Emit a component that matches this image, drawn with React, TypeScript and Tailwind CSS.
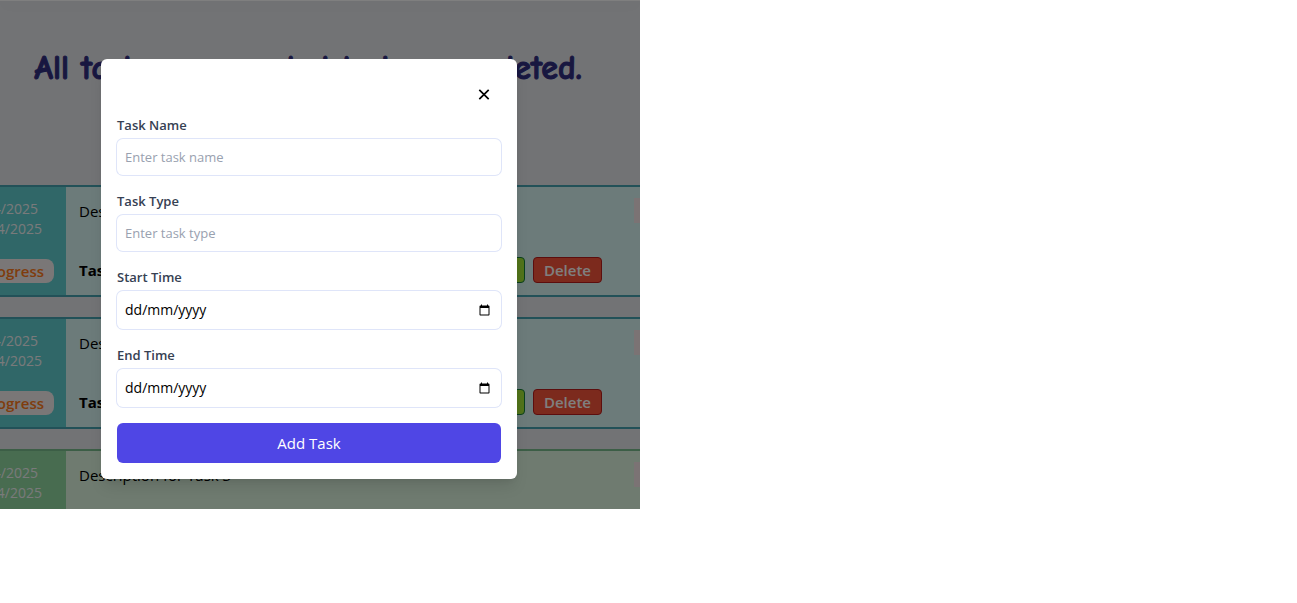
import { useState, type ReactNode } from "react";

type Tone = "teal" | "green";

interface Task {
  id: number;
  tone: Tone;
}

const tasks: Task[] = [
  { id: 1, tone: "teal" },
  { id: 2, tone: "teal" },
  { id: 3, tone: "green" },
];

const tones: Record<Tone, { card: string; side: string }> = {
  teal: { card: "border-[#44a3b0] bg-[#d8f6f4]", side: "bg-[#60ced0]" },
  green: { card: "border-[#78bc8c] bg-[#def6e0]", side: "bg-[#90d8a0]" },
};

function TaskCard({ id, tone }: Task) {
  const look = tones[tone];
  return (
    <article className={`flex h-28 shrink-0 overflow-hidden border-y-2 text-[15px] leading-5 ${look.card}`}>
      <div className={`flex w-[66px] shrink-0 flex-col items-end overflow-hidden whitespace-nowrap py-3 pr-3 text-[14px] text-gray-100 ${look.side}`}>
        <p className="pr-4">14/04/2025</p>
        <p className="pr-3">14/04/2025</p>
        <span className="mt-auto rounded-lg bg-[#f5eeee] px-2.5 py-0.5 text-[15px] font-semibold text-[#ff7a1a]">
          In Progress
        </span>
      </div>
      <div className="relative flex min-w-0 grow flex-col justify-between overflow-hidden pt-3.5 pr-[38px] pb-3 pl-[13px]">
        <p className="text-black">Description for Task {id}</p>
        <span className="absolute top-[11px] -right-16 h-[25px] w-[70px] bg-[#f6e6e8]" />
        <div className="flex items-center justify-between">
          <h2 className="font-bold text-black">Task {id}</h2>
          <div className="flex gap-2">
            <button type="button" className="rounded-sm border border-[#15803d] bg-[#a3e635] px-2.5 py-0.5 font-semibold text-white">
              Edit
            </button>
            <button type="button" className="h-[26px] w-[69px] rounded-sm border border-[#b91c1c] bg-[#f9553a] font-semibold text-white">
              Delete
            </button>
          </div>
        </div>
      </div>
    </article>
  );
}

function Field({ id, label, children }: { id: string; label: string; children: ReactNode }) {
  return (
    <div>
      <label htmlFor={id} className="mb-1 block text-[13px] leading-5 font-semibold text-gray-700">
        {label}
      </label>
      {children}
    </div>
  );
}

const inputLook =
  "block w-full rounded-md bg-white px-2 text-[13px] leading-5 ring-1 ring-[#dfe5f9] outline-none placeholder:text-gray-400";

function DateInput({ id }: { id: string }) {
  const [value, setValue] = useState("");
  const shown = value ? value.split("-").reverse().join("/") : "dd/mm/yyyy";
  return (
    <div className="relative">
      <input
        id={id}
        type="date"
        value={value}
        onChange={(e) => setValue(e.target.value)}
        className={`h-[38px] ${inputLook} [&::-webkit-datetime-edit]:opacity-0`}
      />
      <span className="pointer-events-none absolute inset-y-0 left-2 flex items-center text-[14px] leading-5 text-black">
        {shown}
      </span>
    </div>
  );
}

export default function App() {
  const [open, setOpen] = useState(true);
  return (
    <div className="min-h-screen bg-white font-['Open_Sans','Noto_Sans',sans-serif]">
      <div className="relative max-h-[509px] max-w-[640px] overflow-hidden bg-gray-200">
        <header className="h-px bg-white shadow-[0_2px_16px_0_rgba(0,0,0,0.25)]" />
        <h1 className="flex h-[184px] items-start justify-center pt-11 pr-6 font-['Comic_Neue','Lato',cursive] text-[34px] leading-[46px] font-bold whitespace-nowrap text-[#312e81] [-webkit-text-stroke:1px_#312e81]">
          All tasks are needed to be completed.
        </h1>
        <main className="flex flex-col gap-5">
          {tasks.map((task) => (
            <TaskCard key={task.id} {...task} />
          ))}
        </main>
        {open && (
          <div className="absolute inset-0 flex items-start justify-center bg-black/50 pt-[59px] pr-[22px]">
            <form
              role="dialog"
              aria-label="Add Task"
              onSubmit={(e) => e.preventDefault()}
              className="w-[416px] rounded-md bg-white p-4 shadow-lg"
            >
              <div className="flex h-10 items-center justify-end pr-2">
                <button type="button" aria-label="Close" onClick={() => setOpen(false)}>
                  <svg className="size-[18px]" viewBox="0 0 18 18" fill="none" stroke="black" strokeWidth="1.7">
                    <path d="M4.3 3.8 13.7 13.2M13.7 3.8 4.3 13.2" />
                  </svg>
                </button>
              </div>
              <div className="flex flex-col gap-4">
                <Field id="name" label="Task Name">
                  <input id="name" type="text" placeholder="Enter task name" className={`h-9 ${inputLook}`} />
                </Field>
                <Field id="type" label="Task Type">
                  <input id="type" type="text" placeholder="Enter task type" className={`h-9 ${inputLook}`} />
                </Field>
                <Field id="start" label="Start Time">
                  <DateInput id="start" />
                </Field>
                <Field id="end" label="End Time">
                  <DateInput id="end" />
                </Field>
                <button type="submit" className="h-10 rounded-md bg-[#4f46e5] text-[15px] leading-6 text-white">
                  Add Task
                </button>
              </div>
            </form>
          </div>
        )}
      </div>
    </div>
  );
}
